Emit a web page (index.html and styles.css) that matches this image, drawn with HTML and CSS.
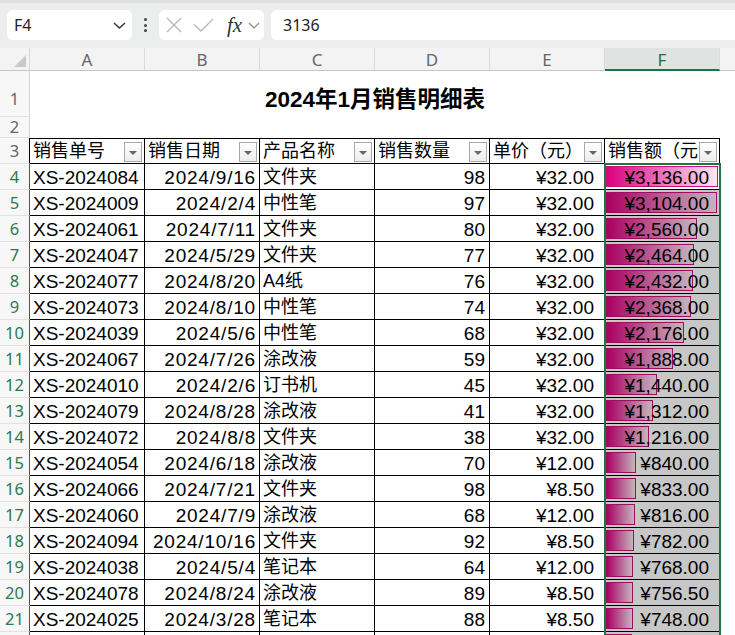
FILE: index.html
```html
<!DOCTYPE html>
<html lang="zh-CN">
<head>
<meta charset="utf-8">
<title>2024年1月销售明细表</title>
<link rel="stylesheet" href="styles.css">
</head>
<body>
<div class="app">
  <div class="toolbar">
    <div class="namebox">
      <span class="nb-text">F4</span>
      <svg class="nb-chev" width="13" height="7" viewBox="0 0 13 7"><path d="M1 1L6.5 6L12 1"/></svg>
    </div>
    <div class="dots"><i></i><i></i><i></i></div>
    <div class="fxbox">
      <svg class="ic-x" width="16" height="16" viewBox="0 0 16 16"><path d="M1 1L15 15M15 1L1 15"/></svg>
      <svg class="ic-check" width="21" height="14" viewBox="0 0 21 14"><path d="M1 6.5L8 13L20 1"/></svg>
      <span class="fx">fx</span>
      <svg class="fx-chev" width="12" height="7" viewBox="0 0 12 7"><path d="M1 1L6 6L11 1"/></svg>
    </div>
    <div class="formula">3136</div>
  </div>

  <div class="sheet">
    <div class="corner"><svg class="tri" width="14" height="14" viewBox="0 0 14 14"><path d="M13 1L13 13L1 13Z"/></svg></div>
    <div class="colh">A</div>
    <div class="colh">B</div>
    <div class="colh">C</div>
    <div class="colh">D</div>
    <div class="colh">E</div>
    <div class="colh sel">F</div>
    <div class="colh last"></div>

    <div class="rowh r1">1</div>
    <div class="title">2024年1月销售明细表</div>
    <div class="g"></div>

    <div class="rowh r2">2</div>
    <div class="blank"></div>
    <div class="g"></div>

    <div class="rowh r3">3</div>
    <div class="hd">销售单号<span class="flt"></span></div>
    <div class="hd">销售日期<span class="flt"></span></div>
    <div class="hd">产品名称<span class="flt"></span></div>
    <div class="hd">销售数量<span class="flt"></span></div>
    <div class="hd">单价（元）<span class="flt"></span></div>
    <div class="hd">销售额（元）<span class="flt"></span></div>
    <div class="g"></div>

    <div class="rowh on">4</div>
    <div class="c">XS-2024084</div><div class="c r d">2024/9/16</div><div class="c cjk">文件夹</div><div class="c r">98</div><div class="c m">¥32.00</div>
    <div class="c m amt"><span class="bar" style="width:112px"></span><span class="v">¥3,136.00</span></div>
    <div class="g"></div>

    <div class="rowh on">5</div>
    <div class="c">XS-2024009</div><div class="c r d">2024/2/4</div><div class="c cjk">中性笔</div><div class="c r">97</div><div class="c m">¥32.00</div>
    <div class="c m amt shade"><span class="bar" style="width:111px"></span><span class="v">¥3,104.00</span></div>
    <div class="g"></div>

    <div class="rowh on">6</div>
    <div class="c">XS-2024061</div><div class="c r d">2024/7/11</div><div class="c cjk">文件夹</div><div class="c r">80</div><div class="c m">¥32.00</div>
    <div class="c m amt shade"><span class="bar" style="width:91.4px"></span><span class="v">¥2,560.00</span></div>
    <div class="g"></div>

    <div class="rowh on">7</div>
    <div class="c">XS-2024047</div><div class="c r d">2024/5/29</div><div class="c cjk">文件夹</div><div class="c r">77</div><div class="c m">¥32.00</div>
    <div class="c m amt shade"><span class="bar" style="width:88px"></span><span class="v">¥2,464.00</span></div>
    <div class="g"></div>

    <div class="rowh on">8</div>
    <div class="c">XS-2024077</div><div class="c r d">2024/8/20</div><div class="c cjk">A4纸</div><div class="c r">76</div><div class="c m">¥32.00</div>
    <div class="c m amt shade"><span class="bar" style="width:86.9px"></span><span class="v">¥2,432.00</span></div>
    <div class="g"></div>

    <div class="rowh on">9</div>
    <div class="c">XS-2024073</div><div class="c r d">2024/8/10</div><div class="c cjk">中性笔</div><div class="c r">74</div><div class="c m">¥32.00</div>
    <div class="c m amt shade"><span class="bar" style="width:84.6px"></span><span class="v">¥2,368.00</span></div>
    <div class="g"></div>

    <div class="rowh on">10</div>
    <div class="c">XS-2024039</div><div class="c r d">2024/5/6</div><div class="c cjk">中性笔</div><div class="c r">68</div><div class="c m">¥32.00</div>
    <div class="c m amt shade"><span class="bar" style="width:77.7px"></span><span class="v">¥2,176.00</span></div>
    <div class="g"></div>

    <div class="rowh on">11</div>
    <div class="c">XS-2024067</div><div class="c r d">2024/7/26</div><div class="c cjk">涂改液</div><div class="c r">59</div><div class="c m">¥32.00</div>
    <div class="c m amt shade"><span class="bar" style="width:67.4px"></span><span class="v">¥1,888.00</span></div>
    <div class="g"></div>

    <div class="rowh on">12</div>
    <div class="c">XS-2024010</div><div class="c r d">2024/2/6</div><div class="c cjk">订书机</div><div class="c r">45</div><div class="c m">¥32.00</div>
    <div class="c m amt shade"><span class="bar" style="width:51.4px"></span><span class="v">¥1,440.00</span></div>
    <div class="g"></div>

    <div class="rowh on">13</div>
    <div class="c">XS-2024079</div><div class="c r d">2024/8/28</div><div class="c cjk">涂改液</div><div class="c r">41</div><div class="c m">¥32.00</div>
    <div class="c m amt shade"><span class="bar" style="width:46.9px"></span><span class="v">¥1,312.00</span></div>
    <div class="g"></div>

    <div class="rowh on">14</div>
    <div class="c">XS-2024072</div><div class="c r d">2024/8/8</div><div class="c cjk">文件夹</div><div class="c r">38</div><div class="c m">¥32.00</div>
    <div class="c m amt shade"><span class="bar" style="width:43.4px"></span><span class="v">¥1,216.00</span></div>
    <div class="g"></div>

    <div class="rowh on">15</div>
    <div class="c">XS-2024054</div><div class="c r d">2024/6/18</div><div class="c cjk">涂改液</div><div class="c r">70</div><div class="c m">¥12.00</div>
    <div class="c m amt shade"><span class="bar" style="width:30px"></span><span class="v">¥840.00</span></div>
    <div class="g"></div>

    <div class="rowh on">16</div>
    <div class="c">XS-2024066</div><div class="c r d">2024/7/21</div><div class="c cjk">文件夹</div><div class="c r">98</div><div class="c m">¥8.50</div>
    <div class="c m amt shade"><span class="bar" style="width:29.8px"></span><span class="v">¥833.00</span></div>
    <div class="g"></div>

    <div class="rowh on">17</div>
    <div class="c">XS-2024060</div><div class="c r d">2024/7/9</div><div class="c cjk">涂改液</div><div class="c r">68</div><div class="c m">¥12.00</div>
    <div class="c m amt shade"><span class="bar" style="width:29.1px"></span><span class="v">¥816.00</span></div>
    <div class="g"></div>

    <div class="rowh on">18</div>
    <div class="c">XS-2024094</div><div class="c r d">2024/10/16</div><div class="c cjk">文件夹</div><div class="c r">92</div><div class="c m">¥8.50</div>
    <div class="c m amt shade"><span class="bar" style="width:27.9px"></span><span class="v">¥782.00</span></div>
    <div class="g"></div>

    <div class="rowh on">19</div>
    <div class="c">XS-2024038</div><div class="c r d">2024/5/4</div><div class="c cjk">笔记本</div><div class="c r">64</div><div class="c m">¥12.00</div>
    <div class="c m amt shade"><span class="bar" style="width:27.4px"></span><span class="v">¥768.00</span></div>
    <div class="g"></div>

    <div class="rowh on">20</div>
    <div class="c">XS-2024078</div><div class="c r d">2024/8/24</div><div class="c cjk">涂改液</div><div class="c r">89</div><div class="c m">¥8.50</div>
    <div class="c m amt shade"><span class="bar" style="width:27px"></span><span class="v">¥756.50</span></div>
    <div class="g"></div>

    <div class="rowh on">21</div>
    <div class="c">XS-2024025</div><div class="c r d">2024/3/28</div><div class="c cjk">笔记本</div><div class="c r">88</div><div class="c m">¥8.50</div>
    <div class="c m amt shade"><span class="bar" style="width:26.7px"></span><span class="v">¥748.00</span></div>
    <div class="g"></div>

    <div class="rowh on"></div>
    <div class="c"></div><div class="c r"></div><div class="c cjk"></div><div class="c r"></div><div class="c m"></div>
    <div class="c m amt shade"><span class="bar" style="width:26.4px"></span></div>
    <div class="g"></div>
  </div>

  <div class="selection"></div>
</div>
</body>
</html>
```

FILE: styles.css
```css
* { box-sizing: border-box; }
html, body { margin: 0; padding: 0; }
body {
  width: 735px;
  height: 635px;
  overflow: hidden;
  background: #fff;
  color: #000;
  font-family: "Liberation Sans", "Noto Sans CJK SC", sans-serif;
}
.app { position: relative; width: 735px; height: 635px; overflow: hidden; }

/* ---------- toolbar ---------- */
.toolbar {
  height: 48px;
  background: #eceeed;
  border-top: 3px solid #e0e2e1;
  padding-top: 7px;
  display: flex;
  align-items: flex-start;
}
.namebox {
  margin-left: 7px;
  width: 125px;
  height: 30px;
  background: #fff;
  border-radius: 6px;
  display: flex;
  align-items: center;
  justify-content: space-between;
  padding: 0 6px 0 7px;
  font: 16px "Noto Sans", "Liberation Sans", sans-serif;
  color: #222;
}
.nb-chev path, .fx-chev path { fill: none; stroke: #333; stroke-width: 1.4; }
.fx-chev path { stroke: #8a8a8a; stroke-width: 1.2; }
.dots {
  width: 27px;
  height: 30px;
  display: flex;
  flex-direction: column;
  align-items: center;
  justify-content: center;
  gap: 2.5px;
}
.dots i { display: block; width: 3px; height: 3px; background: #444; border-radius: 50%; }
.fxbox {
  width: 105px;
  height: 30px;
  background: #fff;
  border-radius: 6px;
  display: flex;
  align-items: center;
  padding-left: 7px;
}
.ic-x path, .ic-check path { fill: none; stroke: #b9b9b9; stroke-width: 1.4; }
.ic-check { margin-left: 11px; }
.fx {
  margin-left: 13px;
  font: italic 21px "Liberation Serif", serif;
  color: #333;
  line-height: 30px;
  width: 20px;
}
.fx-chev { margin-left: 1px; }
.formula {
  margin-left: 7px;
  flex: 1;
  height: 30px;
  background: #fff;
  border-radius: 6px 0 0 6px;
  padding-left: 12px;
  font: 16px/30px "Noto Sans", "Liberation Sans", sans-serif;
  color: #222;
}

/* ---------- sheet grid ---------- */
.sheet {
  display: grid;
  grid-template-columns: 30px repeat(6, 115px) 15px;
  grid-template-rows: 23px 46px 21px repeat(20, 26px);
}
.corner {
  background: #f3f3f3;
  border-right: 1px solid #d8d8d8;
  border-bottom: 1px solid #c6c6c6;
  display: flex;
  align-items: flex-end;
  justify-content: flex-end;
  padding: 0 2px 2px 0;
}
.tri path { fill: #c9c9c9; }
.colh {
  background: #f3f3f3;
  border-right: 1px solid #dadada;
  border-bottom: 1px solid #c6c6c6;
  text-align: center;
  font: 17px/22px "Noto Sans", "Liberation Sans", sans-serif;
  color: #666;
  padding-top: 1px;
}
.colh.sel {
  background: #e1e3e2;
  color: #1f6e43;
  border-bottom: 2px solid #217346;
}
.colh.last { border-right: none; }

.rowh {
  background: #f7f7f7;
  border-right: 1px solid #d6d6d6;
  border-bottom: 1px solid #e2e2e2;
  display: flex;
  align-items: flex-end;
  justify-content: center;
  font: 16.5px/24px "Noto Sans", "Liberation Sans", sans-serif;
  color: #666;
}
.rowh.r1 { padding-bottom: 5px; }
.rowh.r2 { line-height: 20px; }
.rowh.r3 { border-right-color: #000; }
.rowh.on { color: #2d7a50; border-right-color: #217346; }

.title {
  grid-column: 2 / 8;
  display: flex;
  align-items: center;
  justify-content: center;
  padding-top: 5px;
  font-size: 22.5px;
  font-weight: 700;
}
.blank { grid-column: 2 / 8; }
.g { background: #fff; }

.hd {
  position: relative;
  border-top: 1px solid #000;
  border-right: 1px solid #000;
  border-bottom: 1px solid #000;
  padding-left: 3px;
  font-size: 18px;
  line-height: 24px;
  white-space: nowrap;
  overflow: hidden;
}
.flt {
  position: absolute;
  right: 2px;
  top: 3px;
  width: 18px;
  height: 20px;
  background: linear-gradient(#ffffff, #ededed);
  border: 1px solid #a8a8a8;
}
.flt::after {
  content: "";
  position: absolute;
  left: 4px;
  top: 8px;
  border-left: 4px solid transparent;
  border-right: 4px solid transparent;
  border-top: 4px solid #666;
}

.c {
  position: relative;
  border-right: 1px solid #000;
  border-bottom: 1px solid #000;
  padding: 1px 3px 0;
  font-size: 19px;
  line-height: 25px;
  white-space: nowrap;
  overflow: hidden;
}
.c.r { text-align: right; padding-right: 4px; }
.c.d { letter-spacing: 0.8px; padding-right: 3px; }
.c.m { text-align: right; padding-right: 10px; }
.c.cjk { font-size: 18px; }

.bar {
  position: absolute;
  left: 1px;
  top: 2px;
  height: 21px;
  border: 1px solid #c8127f;
  background: linear-gradient(90deg, #db007e 0%, #fde7f3 100%);
}
.v { position: relative; }
.shade::after {
  content: "";
  position: absolute;
  inset: 0;
  background: rgba(0, 0, 0, 0.22);
}

.selection {
  position: absolute;
  left: 604px;
  top: 163px;
  width: 117px;
  height: 480px;
  border: 2px solid #217346;
  pointer-events: none;
}
```
